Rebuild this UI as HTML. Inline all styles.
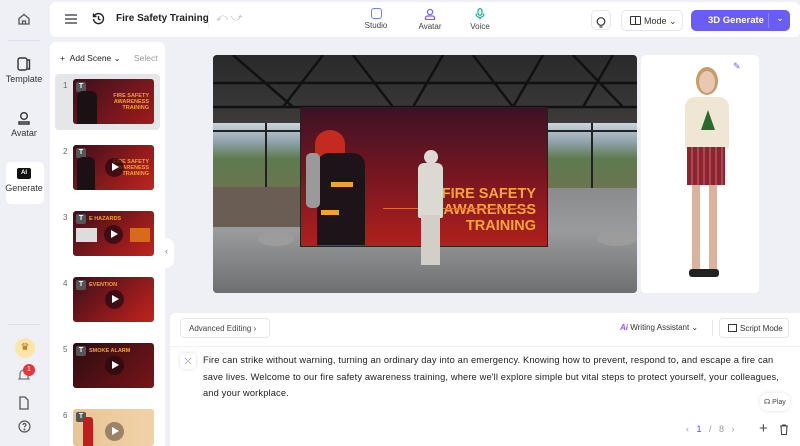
<!DOCTYPE html>
<html><head><meta charset="utf-8"><style>
*{box-sizing:border-box;margin:0;padding:0}
body{width:800px;height:446px;overflow:hidden;background:#eef0f6;font-family:"Liberation Sans",sans-serif;position:relative;color:#222}
.a{position:absolute}
.rail{left:0;top:0;width:48px;height:446px}
.ri{position:absolute;left:0;width:48px;text-align:center;font-size:9px;color:#333}
.top{left:50px;top:2px;width:750px;height:35px;background:#fff;border-radius:6px}
.scenes{left:50px;top:42px;width:115px;height:404px;background:#fff;border-radius:6px 6px 0 0}
.th{position:absolute;left:23px;width:81px;height:45px;border-radius:3px;background:linear-gradient(135deg,#3a0f1c,#8f1a1c 60%,#c0241f)}
.num{position:absolute;left:13px;font-size:8px;color:#666}
.play{position:absolute;left:32px;top:13px;width:19px;height:19px;border-radius:50%;background:rgba(40,10,15,.75)}
.play:after{content:"";position:absolute;left:7px;top:5px;border-left:7px solid #fff;border-top:4.5px solid transparent;border-bottom:4.5px solid transparent}
.tb{position:absolute;left:3px;top:3px;width:10px;height:10px;background:#555;border-radius:2px;color:#fff;font-size:7px;font-weight:bold;text-align:center;line-height:10px}
.tt{position:absolute;font-size:5.5px;font-weight:bold;color:#f6a234}
</style></head><body>
<div class="a rail">
 <div class="ri" style="top:12px"><svg width="14" height="14" viewBox="0 0 14 14" fill="none" stroke="#555" stroke-width="1.3"><path d="M2 6.5L7 2.5l5 4V12H2z"/><path d="M5.5 12V9h3v3"/></svg></div>
 <div style="position:absolute;left:8px;top:40px;width:32px;height:1px;background:#dde"></div>
 <div class="ri" style="top:56px"><svg width="16" height="16" viewBox="0 0 16 16" fill="none" stroke="#333" stroke-width="1.4"><rect x="2" y="2" width="9" height="12" rx="2"/><path d="M11 4h2.5v9H11"/></svg><div>Template</div></div>
 <div class="ri" style="top:110px"><svg width="16" height="16" viewBox="0 0 16 16" fill="none" stroke="#333" stroke-width="1.4"><circle cx="8" cy="6" r="3.3"/><path d="M3 14h10v-2H3z"/></svg><div>Avatar</div></div>
 <div style="position:absolute;left:6px;top:162px;width:38px;height:42px;background:#fff;border-radius:5px"></div>
 <div class="ri" style="top:168px"><div style="margin:0 auto;width:14px;height:11px;background:#111;border-radius:2px;color:#fff;font-size:6px;font-weight:bold;line-height:11px">AI</div><div style="margin-top:4px">Generate</div></div>
 <div style="position:absolute;left:8px;top:324px;width:32px;height:1px;background:#dde"></div>
 <div style="position:absolute;left:15px;top:338px;width:20px;height:20px;border-radius:50%;background:#fbe6a8;color:#b06a10;font-size:10px;text-align:center;line-height:20px">♛</div>
 <div class="ri" style="top:368px"><svg width="12" height="14" viewBox="0 0 12 14" fill="none" stroke="#777" stroke-width="1.3"><path d="M2 10V6a4 4 0 018 0v4l1 1H1z"/></svg></div>
 <div style="position:absolute;left:23px;top:364px;width:12px;height:12px;border-radius:50%;background:#e8343a;color:#fff;font-size:7px;text-align:center;line-height:12px">1</div>
 <div class="ri" style="top:396px"><svg width="12" height="14" viewBox="0 0 12 14" fill="none" stroke="#555" stroke-width="1.3"><path d="M2 1h5l3 3v9H2z"/></svg></div>
 <div class="ri" style="top:420px"><svg width="13" height="13" viewBox="0 0 13 13" fill="none" stroke="#555" stroke-width="1.2"><circle cx="6.5" cy="6.5" r="5.5"/><path d="M5 5a1.5 1.5 0 113 0c0 1-1.5 1-1.5 2.2"/><circle cx="6.5" cy="9.5" r=".4"/></svg></div>
</div>

<div class="a top">
 <svg class="a" style="left:15px;top:11px" width="12" height="12" viewBox="0 0 12 12" stroke="#333" stroke-width="1.3"><path d="M0 2h12M0 6h12M0 10h12"/></svg>
 <svg class="a" style="left:42px;top:10px" width="13" height="13" viewBox="0 0 13 13" fill="none" stroke="#222" stroke-width="1.4"><path d="M2.2 4A5 5 0 111.5 7"/><path d="M1.5 1.5V4.5h3"/><path d="M6.5 4v3l2 1"/></svg>
 <div class="a" style="left:66px;top:11px;font-size:10px;font-weight:bold">Fire Safety Training</div>
 <div class="a" style="left:158px;top:8px;width:1px;height:18px;background:#eee"></div>
 <div class="a" style="left:166px;top:10px;font-size:11px;color:#bbb">⤺ ⤻</div>
 <div class="a" style="left:313px;top:6px;width:26px;text-align:center;font-size:8px;color:#444"><div style="margin:0 auto 2px;width:11px;height:11px;border:1.4px solid #5b8cf0;border-radius:3px"></div>Studio</div>
 <div class="a" style="left:365px;top:6px;width:30px;text-align:center;font-size:8px;color:#444"><svg width="12" height="12" viewBox="0 0 12 12" fill="none" stroke="#7b61ff" stroke-width="1.3"><circle cx="6" cy="4" r="2.6"/><path d="M1.5 11.5h9v-1.5a2 2 0 00-2-2h-5a2 2 0 00-2 2z"/></svg><div>Avatar</div></div>
 <div class="a" style="left:416px;top:6px;width:28px;text-align:center;font-size:8px;color:#444"><svg width="12" height="12" viewBox="0 0 12 12" fill="none" stroke="#1eb39a" stroke-width="1.3"><rect x="4" y="0.7" width="4" height="6.5" rx="2"/><path d="M2 5.5a4 4 0 008 0M6 9.5v2"/></svg><div>Voice</div></div>
 <div class="a" style="left:541px;top:8px;width:20px;height:20px;border:1px solid #e4e6ee;border-radius:5px;text-align:center;padding-top:4px"><svg width="10" height="11" viewBox="0 0 10 11" fill="none" stroke="#333" stroke-width="1.2"><circle cx="5" cy="4.5" r="3.8"/><path d="M3.5 10h3"/></svg></div>
 <div class="a" style="left:571px;top:8px;width:62px;height:21px;border:1px solid #e4e6ee;border-radius:5px;font-size:9px;color:#333;padding:5px 0 0 8px"><span style="display:inline-block;width:11px;height:9px;border:1.2px solid #333;border-radius:1px;vertical-align:-1px;margin-right:3px;background:linear-gradient(90deg,transparent 45%,#333 45%,#333 55%,transparent 55%)"></span>Mode ⌄</div>
 <div class="a" style="left:641px;top:8px;width:99px;height:21px;background:#6a5cf6;border-radius:5px;color:#fff;font-size:9.5px;font-weight:bold;padding:5px 0 0 17px;white-space:nowrap">3D Generate<span style="position:absolute;left:77px;top:3px;width:1px;height:15px;background:#8d83f8"></span><span style="position:absolute;left:85px;top:3px;font-weight:normal">⌄</span></div>
</div>

<div class="a scenes">
 <div class="a" style="left:10px;top:11px;font-size:8.5px;color:#222">+ &nbsp;Add Scene ⌄</div>
 <div class="a" style="left:84px;top:11px;font-size:8.5px;color:#999">Select</div>
 <div class="a" style="left:5px;top:32px;width:105px;height:56px;background:#e5e6ea;border-radius:4px"></div>
 <div class="num" style="top:39px">1</div>
 <div class="th" style="top:37px;background:linear-gradient(135deg,#3a0f1c,#a01b1d)"><div class="tb">T</div><div style="position:absolute;left:4px;top:12px;width:20px;height:33px;background:#1b1014;border-radius:6px 6px 0 0"></div><div class="tt" style="left:38px;top:14px;text-align:right;width:38px">FIRE SAFETY<br>AWARENESS<br>TRAINING</div></div>
 <div class="num" style="top:105px">2</div>
 <div class="th" style="top:103px"><div class="tb">T</div><div style="position:absolute;left:4px;top:12px;width:18px;height:33px;background:#1b1014;border-radius:6px 6px 0 0"></div><div class="tt" style="left:38px;top:14px;text-align:right;width:38px">FIRE SAFETY<br>AWARENESS<br>TRAINING</div><div class="play"></div></div>
 <div class="num" style="top:171px">3</div>
 <div class="th" style="top:169px"><div class="tb">T</div><div class="tt" style="left:16px;top:5px">E HAZARDS</div><div style="position:absolute;left:3px;top:17px;width:21px;height:14px;background:#ddd"></div><div style="position:absolute;left:57px;top:17px;width:20px;height:14px;background:#d86a1c"></div><div class="play" style="left:31px;top:14px"></div></div>
 <div class="num" style="top:237px">4</div>
 <div class="th" style="top:235px"><div class="tb">T</div><div class="tt" style="left:16px;top:5px">EVENTION</div><div class="play"></div></div>
 <div class="num" style="top:303px">5</div>
 <div class="th" style="top:301px;background:linear-gradient(135deg,#2a0c12,#7a1517)"><div class="tb">T</div><div class="tt" style="left:16px;top:5px">SMOKE ALARM</div><div class="play"></div></div>
 <div class="num" style="top:369px">6</div>
 <div class="th" style="top:367px;height:37px;background:linear-gradient(90deg,#e8c598,#f1d2a8)"><div class="tb">T</div><div style="position:absolute;left:10px;top:8px;width:10px;height:29px;background:#c21d1d;border-radius:3px 3px 0 0"></div><div class="play" style="background:rgba(120,100,80,.7)"></div></div>
</div>
<div class="a" style="left:162px;top:238px;width:12px;height:30px;background:#fff;border-radius:0 8px 8px 0;font-size:9px;color:#777;padding:8px 0 0 3px">‹</div>

<div class="a" style="left:213px;top:55px;width:424px;height:238px;border-radius:4px;overflow:hidden;background:#7b7d80">
 <div class="a" style="left:0;top:0;width:424px;height:68px;background:linear-gradient(#2a2a2b,#3c3b3a)"></div>
 <svg class="a" style="left:0;top:0" width="424" height="68"><g stroke="#111" stroke-width="2.5" fill="none"><path d="M0 28h424M0 52h424M20 0l60 52M110 0l-40 52M140 0l40 52M230 0l-30 52M260 0l40 52M330 0l-30 52M360 0l50 52M400 0l-30 52"/></g></svg>
 <div class="a" style="left:0;top:68px;width:424px;height:65px;background:linear-gradient(#c9d4dc 0%,#8ea0a8 30%,#5f7a4f 55%,#6b7550 100%)"></div>
 <div class="a" style="left:0;top:133px;width:424px;height:105px;background:linear-gradient(#8a8b8c,#9a9b9c 40%,#6e6f71)"></div>
 <div class="a" style="left:0;top:75px;width:424px;height:2px;background:#222"></div>
 <div class="a" style="left:52px;top:68px;width:2px;height:65px;background:#222"></div>
 <div class="a" style="left:378px;top:68px;width:2px;height:65px;background:#222"></div>
 <div class="a" style="left:0;top:132px;width:90px;height:40px;background:#6a5e54"></div>
 <div class="a" style="left:45px;top:177px;width:36px;height:14px;border-radius:50%;background:#9c9c9c"></div>
 <div class="a" style="left:384px;top:175px;width:40px;height:16px;border-radius:50%;background:#9c9c9c"></div>
 <div class="a" style="left:87px;top:52px;width:248px;height:140px;background:linear-gradient(#3d1226,#781620 50%,#b0201e);border:1px solid #222">
  <div class="a" style="left:14px;top:22px;width:30px;height:28px;border-radius:50% 50% 10% 10%;background:#c52a1e"></div>
  <div class="a" style="left:16px;top:45px;width:48px;height:92px;background:#1c1418;border-radius:12px 12px 0 0"></div>
  <div class="a" style="left:5px;top:45px;width:14px;height:55px;background:#9a9a9a;border-radius:5px"></div>
  <div class="a" style="left:30px;top:74px;width:22px;height:5px;background:#f0a526"></div>
  <div class="a" style="left:20px;top:102px;width:18px;height:5px;background:#f0a526"></div>
  <div class="a" style="left:100px;top:78px;width:145px;text-align:right;font-size:14.5px;font-weight:bold;color:#f7a53a;line-height:16px;padding-right:10px">FIRE SAFETY<br>AWARENESS<br>TRAINING</div>
  <div class="a" style="left:82px;top:100px;width:145px;height:1px;background:#e86a2a"></div>
 </div>
 <div class="a" style="left:211px;top:95px;width:14px;height:14px;border-radius:50%;background:#ddd9d4"></div>
 <div class="a" style="left:205px;top:108px;width:25px;height:55px;background:#dcd8d2;border-radius:6px 6px 2px 2px"></div>
 <div class="a" style="left:208px;top:160px;width:19px;height:50px;background:#d2cec8"></div>
</div>

<div class="a" style="left:641px;top:55px;width:118px;height:238px;background:#fff;border-radius:5px">
 <div class="a" style="left:92px;top:6px;width:14px;height:14px;color:#6a5cf6;font-size:9px">✎</div>
 <div class="a" style="left:55px;top:12px;width:22px;height:28px;border-radius:50%;background:#c59d6a"></div>
 <div class="a" style="left:58px;top:16px;width:16px;height:22px;border-radius:50%;background:#e9c8b2"></div>
 <div class="a" style="left:44px;top:42px;width:44px;height:52px;background:#efe7d4;border-radius:10px 10px 2px 2px"></div>
 <div class="a" style="left:60px;top:55px;width:14px;height:20px;background:#2b6a2e;clip-path:polygon(50% 0,100% 100%,0 100%)"></div>
 <div class="a" style="left:46px;top:92px;width:38px;height:38px;background:repeating-linear-gradient(90deg,#8a2630 0 4px,#b24552 4px 6px)"></div>
 <div class="a" style="left:51px;top:130px;width:8px;height:88px;background:#d9b39c"></div>
 <div class="a" style="left:68px;top:130px;width:8px;height:88px;background:#d9b39c"></div>
 <div class="a" style="left:48px;top:214px;width:30px;height:8px;background:#222;border-radius:3px"></div>
</div>

<div class="a" style="left:170px;top:313px;width:630px;height:133px;background:#fff;border-radius:5px 0 0 0">
 <div class="a" style="left:10px;top:5px;width:90px;height:20px;border:1px solid #e4e6ee;border-radius:4px;font-size:8px;color:#444;padding:5px 0 0 8px;white-space:nowrap">Advanced Editing ›</div>
 <div class="a" style="left:450px;top:10px;font-size:8px;color:#333"><b style="color:#a055e8;font-style:italic">Ai</b> Writing Assistant ⌄</div>
 <div class="a" style="left:542px;top:7px;width:1px;height:16px;background:#e4e6ee"></div>
 <div class="a" style="left:549px;top:5px;width:70px;height:20px;border:1px solid #e4e6ee;border-radius:4px;font-size:8px;color:#333;padding:5px 0 0 8px;white-space:nowrap"><span style="display:inline-block;width:9px;height:8px;border:1.1px solid #333;vertical-align:-1px;margin-right:3px"></span>Script Mode</div>
 <div class="a" style="left:0;top:33px;width:630px;height:1px;background:#f0f1f4"></div>
 <div class="a" style="left:10px;top:40px;width:16px;height:16px;border-radius:4px;background:#fff;box-shadow:0 0 3px rgba(0,0,0,.15);color:#5b4cf0;font-size:9px;text-align:center;line-height:16px">⤫</div>
 <div class="a" style="left:33px;top:39px;width:592px;font-size:9.3px;line-height:16.5px;color:#222;letter-spacing:.14px">Fire can strike without warning, turning an ordinary day into an emergency. Knowing how to prevent, respond to, and escape a fire can save lives. Welcome to our fire safety awareness training, where we'll explore simple but vital steps to protect yourself, your colleagues, and your workplace.</div>
 <div class="a" style="left:590px;top:80px;width:30px;height:18px;border-radius:8px;background:#fff;box-shadow:0 0 4px rgba(0,0,0,.12);font-size:7px;color:#444;padding:5px 0 0 4px">☊ Play</div>
 <div class="a" style="left:516px;top:111px;font-size:9px;color:#999;word-spacing:5px">‹ <span style="color:#5b4cf0">1</span> / 8 ›</div>
 <div class="a" style="left:589px;top:107px;font-size:15px;color:#444">+</div>
 <svg class="a" style="left:609px;top:111px" width="10" height="11" viewBox="0 0 10 11" fill="none" stroke="#444" stroke-width="1.1"><path d="M1 2h8M3.5 2V1h3v1M2 2l.6 8.5h4.8L8 2"/></svg>
</div>
</body></html>
